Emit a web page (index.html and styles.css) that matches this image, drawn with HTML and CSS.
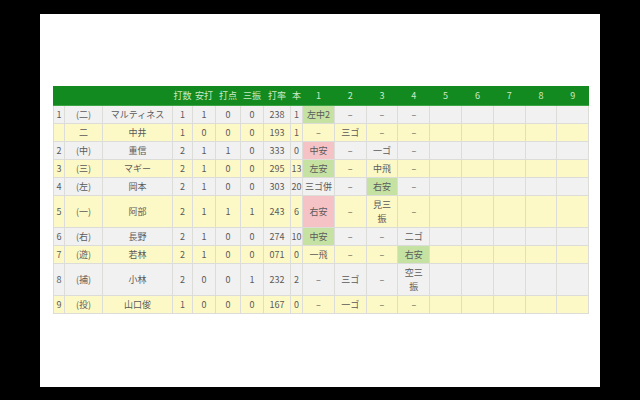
FILE: index.html
```html
<!DOCTYPE html>
<html lang="ja">
<head>
<meta charset="utf-8">
<link rel="stylesheet" href="styles.css">
</head>
<body>
<div class="panel">
<table class="score">
<colgroup>
<col class="c-ord"><col class="c-pos"><col class="c-name">
<col class="c-ab"><col class="c-h"><col class="c-rbi"><col class="c-so"><col class="c-avg"><col class="c-hr">
<col class="c-inn"><col class="c-inn"><col class="c-inn"><col class="c-inn"><col class="c-inn"><col class="c-inn"><col class="c-inn"><col class="c-inn"><col class="c-inn">
</colgroup>
<thead>
<tr><th></th><th></th><th></th><th>打数</th><th>安打</th><th>打点</th><th>三振</th><th>打率</th><th>本</th><th>1</th><th>2</th><th>3</th><th>4</th><th>5</th><th>6</th><th>7</th><th>8</th><th>9</th></tr>
</thead>
<tbody>
<tr class="odd"><td>1</td><td>(二)</td><td>マルティネス</td><td>1</td><td>1</td><td>0</td><td>0</td><td>238</td><td>1</td><td class="hit">左中2</td><td>–</td><td>–</td><td>–</td><td></td><td></td><td></td><td></td><td></td></tr>
<tr class="even"><td></td><td>二</td><td>中井</td><td>1</td><td>0</td><td>0</td><td>0</td><td>193</td><td>1</td><td>–</td><td>三ゴ</td><td>–</td><td>–</td><td></td><td></td><td></td><td></td><td></td></tr>
<tr class="odd"><td>2</td><td>(中)</td><td>重信</td><td>2</td><td>1</td><td>1</td><td>0</td><td>333</td><td>0</td><td class="rbi">中安</td><td>–</td><td>一ゴ</td><td>–</td><td></td><td></td><td></td><td></td><td></td></tr>
<tr class="even"><td>3</td><td>(三)</td><td>マギー</td><td>2</td><td>1</td><td>0</td><td>0</td><td>295</td><td>13</td><td class="hit">左安</td><td>–</td><td>中飛</td><td>–</td><td></td><td></td><td></td><td></td><td></td></tr>
<tr class="odd"><td>4</td><td>(左)</td><td>岡本</td><td>2</td><td>1</td><td>0</td><td>0</td><td>303</td><td>20</td><td>三ゴ併</td><td>–</td><td class="hit">右安</td><td>–</td><td></td><td></td><td></td><td></td><td></td></tr>
<tr class="even"><td>5</td><td>(一)</td><td>阿部</td><td>2</td><td>1</td><td>1</td><td>1</td><td>243</td><td>6</td><td class="rbi">右安</td><td>–</td><td>見三<br>振</td><td>–</td><td></td><td></td><td></td><td></td><td></td></tr>
<tr class="odd"><td>6</td><td>(右)</td><td>長野</td><td>2</td><td>1</td><td>0</td><td>0</td><td>274</td><td>10</td><td class="hit">中安</td><td>–</td><td>–</td><td>二ゴ</td><td></td><td></td><td></td><td></td><td></td></tr>
<tr class="even"><td>7</td><td>(遊)</td><td>若林</td><td>2</td><td>1</td><td>0</td><td>0</td><td>071</td><td>0</td><td>一飛</td><td>–</td><td>–</td><td class="hit">右安</td><td></td><td></td><td></td><td></td><td></td></tr>
<tr class="odd"><td>8</td><td>(捕)</td><td>小林</td><td>2</td><td>0</td><td>0</td><td>1</td><td>232</td><td>2</td><td>–</td><td>三ゴ</td><td>–</td><td>空三<br>振</td><td></td><td></td><td></td><td></td><td></td></tr>
<tr class="even"><td>9</td><td>(投)</td><td>山口俊</td><td>1</td><td>0</td><td>0</td><td>0</td><td>167</td><td>0</td><td>–</td><td>一ゴ</td><td>–</td><td>–</td><td></td><td></td><td></td><td></td><td></td></tr>
</tbody>
</table>
</div>
</body>
</html>
```

FILE: styles.css
```css
html, body {
  margin: 0;
  padding: 0;
  background: #000;
}
body {
  width: 640px;
  height: 400px;
  overflow: hidden;
  font-family: "Noto Sans CJK JP", "Noto Sans", sans-serif;
}
.panel {
  margin: 14px 0 0 40px;
  width: 560px;
  height: 373px;
  background: #fff;
  padding: 72px 0 0 13px;
  box-sizing: border-box;
}
.score {
  border-collapse: collapse;
  table-layout: fixed;
  width: 535px;
  font-size: 9px;
  color: #5a5a5a;
}
.c-ord { width: 11px; }
.c-pos { width: 38px; }
.c-name { width: 70px; }
.c-ab { width: 20px; }
.c-h { width: 23px; }
.c-rbi { width: 25px; }
.c-so { width: 23px; }
.c-avg { width: 27px; }
.c-hr { width: 12px; }
.c-inn { width: 31.8px; }
.score th {
  background: #138a1f;
  color: #cdeac4;
  font-weight: normal;
  height: 18px;
  padding: 0;
  line-height: 14px;
  border: 1px solid #138a1f;
  border-bottom-color: #3aa444;
  white-space: nowrap;
}
.score td {
  padding: 1.5px 0;
  line-height: 14px;
  height: 14px;
  text-align: center;
  border: 1px solid #dcdcd8;
  white-space: nowrap;
}
.score tr.odd td { background: #f1f1f1; }
.score tr.even td { background: #fdf9c6; }
.score tr td.hit { background: #c6e2a2; }
.score tr td.rbi { background: #f5c3c6; }
```
